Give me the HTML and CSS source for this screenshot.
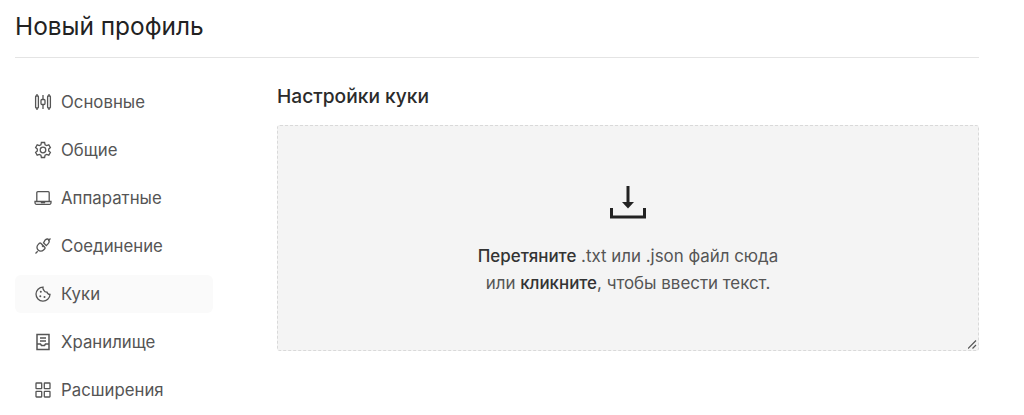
FILE: index.html
```html
<!DOCTYPE html>
<html lang="ru">
<head>
<meta charset="utf-8">
<title>Новый профиль</title>
<link rel="stylesheet" href="styles.css">
</head>
<body>
<div class="page">
  <h1 class="title">Новый профиль</h1>
  <div class="layout">
    <nav class="nav">
      <a class="item"><svg class="ico" viewBox="0 0 18 18"><path d="M3 1v2M3 15v2M15 1v2M15 15v2M9 2v4M9 12v4"/><rect x="1.600" y="3" width="2.800" height="12" rx=".8"/><rect x="13.600" y="3" width="2.800" height="12" rx=".8"/><rect x="7" y="6.500" width="4" height="5" rx="1"/></svg>Основные</a>
      <a class="item"><svg class="ico" viewBox="0 0 18 18"><path d="M7.400 1.500h3.200l.5 2.300 1.500.8 2.200-.8 1.600 2.800-1.700 1.500v1.800l1.700 1.500-1.600 2.800-2.200-.8-1.500.8-.5 2.300H7.400l-.5-2.300-1.500-.8-2.200.8-1.600-2.800 1.700-1.500V8.100L1.600 6.600l1.600-2.800 2.200.8 1.500-.8z"/><circle cx="9" cy="9" r="2.800"/></svg>Общие</a>
      <a class="item"><svg class="ico" viewBox="0 0 18 18"><path d="M2.800 12V3.700a1 1 0 0 1 1-1h10.400a1 1 0 0 1 1 1V12M1 12.500h16v1.300a1.500 1.500 0 0 1-1.500 1.500h-13A1.500 1.500 0 0 1 1 13.800zM7 12.500l.5 1h3l.5-1"/></svg>Аппаратные</a>
      <a class="item"><svg class="ico" viewBox="0 0 18 18"><path d="M1.500 16.500l2.200-2.200M14.300 3.700l2.200-2.200M8 8.500l1.500 1.500"/><path d="M7.800 7.300l3 3a1 1 0 0 1 0 1.400l-1.300 1.300a3.800 3.800 0 0 1-5.400 0 3.800 3.800 0 0 1 0-5.400l1.300-1.300a1 1 0 0 1 1.400 0zM9.500 5.800l2.800 2.800 1.700-1.700a3.500 3.500 0 0 0 0-4.900 3.500 3.500 0 0 0-2.800 1z"/></svg>Соединение</a>
      <a class="item active"><svg class="ico" viewBox="0 0 18 18"><path d="M9 2.200a7 7 0 1 0 7 7.300 3 3 0 0 1-3-2.300 3.300 3.300 0 0 1-3.200-2A3.300 3.300 0 0 1 9 2.200z"/><circle class="dot" cx="6.800" cy="6.800" r="1"/><circle class="dot" cx="6.300" cy="11.300" r="1"/><circle class="dot" cx="10.500" cy="12" r="1"/></svg>Куки</a>
      <a class="item"><svg class="ico store" viewBox="0 0 18 18"><path d="M3 1.500h12v15H3zM6 5h6M6 8h6M3 11h3.500l1 1.500h3l1-1.500H15"/></svg>Хранилище</a>
      <a class="item"><svg class="ico" viewBox="0 0 18 18"><rect x="2" y="2" width="5.700" height="5.700" rx=".5"/><rect x="10.300" y="2" width="5.700" height="5.700" rx=".5"/><rect x="2" y="10.300" width="5.700" height="5.700" rx=".5"/><rect x="10.300" y="10.300" width="5.700" height="5.700" rx=".5"/></svg>Расширения</a>
    </nav>
    <main class="content">
      <h2 class="heading">Настройки куки</h2>
      <div class="drop">
        <svg class="upload" viewBox="0 0 36 33"><path class="thick" d="M18 0v17"/><path class="solid" d="M12 16h12L18 22.500z"/><path class="thick" d="M1.500 22v9h33v-9"/></svg>
        <p class="hint"><b>Перетяните</b> .txt или .json файл сюда<br>или <b>кликните</b>, чтобы ввести текст.</p>
        <svg class="grip" viewBox="0 0 9 9"><path d="M0 8.500L8 .5M4.500 8.500L8 5"/></svg>
      </div>
    </main>
  </div>
</div>
</body>
</html>
```
FILE: styles.css
```css
* { box-sizing: border-box; }
html, body { margin: 0; height: 415px; overflow: hidden; background: #fff; }
body { font-family: Inter, "Noto Sans", sans-serif; color: #2b2b2b; }
.page { width: 964px; margin-left: 15px; }
.title {
  margin: 0;
  height: 58px;
  padding-top: 12px;
  font-size: 24.400px;
  line-height: 28px;
  font-weight: 400;
  color: #222;
  border-bottom: 1px solid #e4e4e4;
}
.layout { display: flex; padding-top: 24px; }
.nav { width: 198px; margin-right: 64px; flex: none; display: flex; flex-direction: column; gap: 10px; margin-top: 1px; }
.item {
  display: flex;
  align-items: center;
  height: 38px;
  padding-left: 19px;
  gap: 9px;
  font-size: 16.800px;
  color: #555;
  border-radius: 6px;
}
.item.active { background: #fafafa; }
.ico { width: 18px; height: 18px; flex: none; fill: none; stroke: #555; stroke-width: 1.300; }
.ico.store { stroke-width: 1.500; }
.ico .dot { fill: #555; stroke: none; }
.content { flex: 1; min-width: 0; }
.heading { margin: 0 0 15px; font-size: 19.200px; line-height: 28px; font-weight: 500; color: #2b2b2b; }
.drop {
  position: relative;
  height: 226px;
  background: #f4f4f4;
  border: 1px dashed #d9d9d9;
  border-radius: 3px;
  text-align: center;
  padding-top: 60px;
}
.upload { display: block; width: 36px; height: 33px; margin: 0 auto 24px; fill: none; }
.thick { stroke: #222; stroke-width: 3; fill: none; }
.solid { fill: #222; }
.hint { margin: 0; font-size: 16.900px; line-height: 27px; color: #555; }
.hint b { font-weight: 500; color: #333; }
.grip { position: absolute; right: 1px; bottom: 1px; width: 9px; height: 9px; fill: none; stroke: #555; stroke-width: 1.200; }
```
